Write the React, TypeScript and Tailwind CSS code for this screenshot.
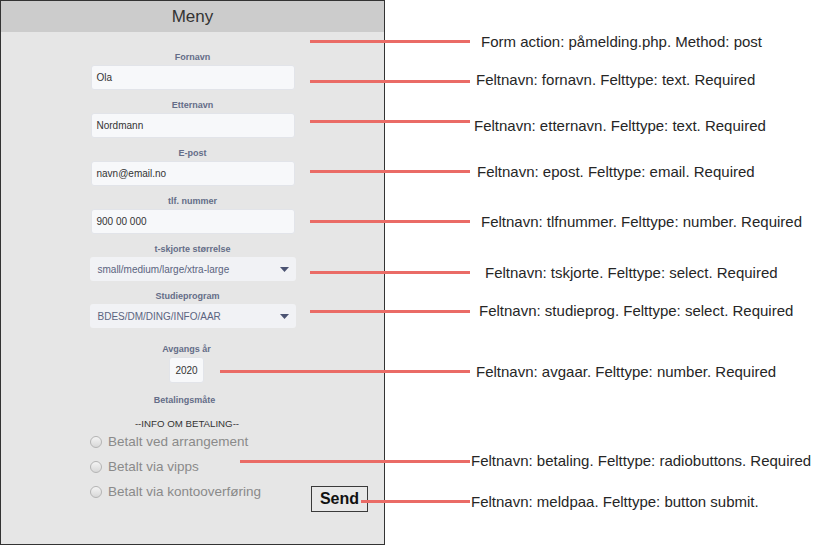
import React from "react";

const notes: { y: number; tx: number; ty: number; x1: number; text: string }[] = [
  { y: 41, tx: 481, ty: 42, x1: 310, text: "Form action: påmelding.php. Method: post" },
  { y: 81, tx: 476, ty: 80, x1: 310, text: "Feltnavn: fornavn. Felttype: text. Required" },
  { y: 121, tx: 474, ty: 126, x1: 310, text: "Feltnavn: etternavn. Felttype: text. Required" },
  { y: 171, tx: 477, ty: 172, x1: 310, text: "Feltnavn: epost. Felttype: email. Required" },
  { y: 221, tx: 481, ty: 222, x1: 310, text: "Feltnavn: tlfnummer. Felttype: number. Required" },
  { y: 272, tx: 485, ty: 273, x1: 310, text: "Feltnavn: tskjorte. Felttype: select. Required" },
  { y: 311, tx: 479, ty: 311, x1: 310, text: "Feltnavn: studieprog. Felttype: select. Required" },
  { y: 371, tx: 476, ty: 372, x1: 220, text: "Feltnavn: avgaar. Felttype: number. Required" },
  { y: 461, tx: 471, ty: 461, x1: 240, text: "Feltnavn: betaling. Felttype: radiobuttons. Required" },
  { y: 501, tx: 471, ty: 502, x1: 361, text: "Feltnavn: meldpaa. Felttype: button submit." },
];

function Label({ children, className = "" }: { children: React.ReactNode; className?: string }) {
  return (
    <div className={"h-[12px] leading-[12px] text-[9px] font-bold text-[#646d88] mb-[2px] " + className}>
      {children}
    </div>
  );
}

function TextInput({ value }: { value: string }) {
  return (
    <div className="w-[204px] h-[25px] bg-[#f7f8fa] border border-[#e2e4e9] rounded-[3px] flex items-center pl-[5px] text-[10px] text-[#333]">
      {value}
    </div>
  );
}

function Select({ value }: { value: string }) {
  return (
    <div className="w-[206px] h-[24px] bg-[#f1f2f5] rounded-[3px] flex items-center justify-between pl-[8px] pr-[7px] text-[10px] text-[#5b6480]">
      <span>{value}</span>
      <svg width="9" height="5" viewBox="0 0 9 5">
        <path d="M0 0 L9 0 L4.5 5 Z" fill="#4b5372" />
      </svg>
    </div>
  );
}

function Radio({ label }: { label: string }) {
  return (
    <div className="h-[16px] flex items-center gap-[6px]">
      <div className="w-[12px] h-[12px] rounded-full border border-[#b4b4b4] bg-gradient-to-b from-[#f4f4f4] to-[#d8d8d8]" />
      <span className="text-[13.5px] leading-[16px] text-[#8a8a8a]">{label}</span>
    </div>
  );
}

export default function App() {
  return (
    <div className="relative w-[816px] h-[546px] bg-white overflow-hidden font-['Liberation_Sans',Arial,sans-serif]">
      <div className="w-[385px] h-[545px] border border-[#333] bg-[#e6e6e6] flex flex-col">
        <div className="h-[31px] bg-[#cccccc] flex items-center justify-center text-[17px] text-[#333]">
          Meny
        </div>
        <div className="flex flex-col items-center pt-[19px]">
          <Label>Fornavn</Label>
          <TextInput value="Ola" />
          <Label className="mt-[9px]">Etternavn</Label>
          <TextInput value="Nordmann" />
          <Label className="mt-[9px]">E-post</Label>
          <TextInput value="navn@email.no" />
          <Label className="mt-[9px]">tlf. nummer</Label>
          <TextInput value="900 00 000" />
          <Label className="mt-[9px]">t-skjorte størrelse</Label>
          <Select value="small/medium/large/xtra-large" />
          <Label className="mt-[9px] mr-[10px]">Studieprogram</Label>
          <Select value="BDES/DM/DING/INFO/AAR" />
          <Label className="mt-[15px] mr-[12px]">Avgangs år</Label>
          <div className="mr-[12px] w-[35px] h-[26px] bg-[#f7f8fa] border border-[#e2e4e9] rounded-[3px] flex items-center justify-center text-[10px] text-[#333]">
            2020
          </div>
          <Label className="mt-[11px] mr-[16px]">Betalingsmåte</Label>
          <div className="mt-[10px] mr-[11px] h-[12px] leading-[12px] text-[9.7px] text-[#333]">
            --INFO OM BETALING--
          </div>
          <div className="self-start ml-[89px] w-[278px] flex justify-between mt-[4px]">
            <div className="flex flex-col gap-[9px]">
              <Radio label="Betalt ved arrangement" />
              <Radio label="Betalt via vipps" />
              <Radio label="Betalt via kontooverføring" />
            </div>
            <div className="pt-[52px]">
              <div className="w-[57px] h-[26px] border border-[#3a3a3a] bg-[#e8e8e8] flex items-center justify-center text-[16px] font-bold text-[#111]">
                Send
              </div>
            </div>
          </div>
        </div>
      </div>

      {notes.map((n, i) => (
        <React.Fragment key={i}>
          <div
            className="absolute h-[3px] bg-[#ea6b66]"
            style={{ left: n.x1, top: n.y - 1.5, width: 470 - n.x1 }}
          />
          <div
            className="absolute text-[15px] leading-[18px] text-[#262626] whitespace-nowrap"
            style={{ left: n.tx, top: n.ty - 9 }}
          >
            {n.text}
          </div>
        </React.Fragment>
      ))}
    </div>
  );
}
